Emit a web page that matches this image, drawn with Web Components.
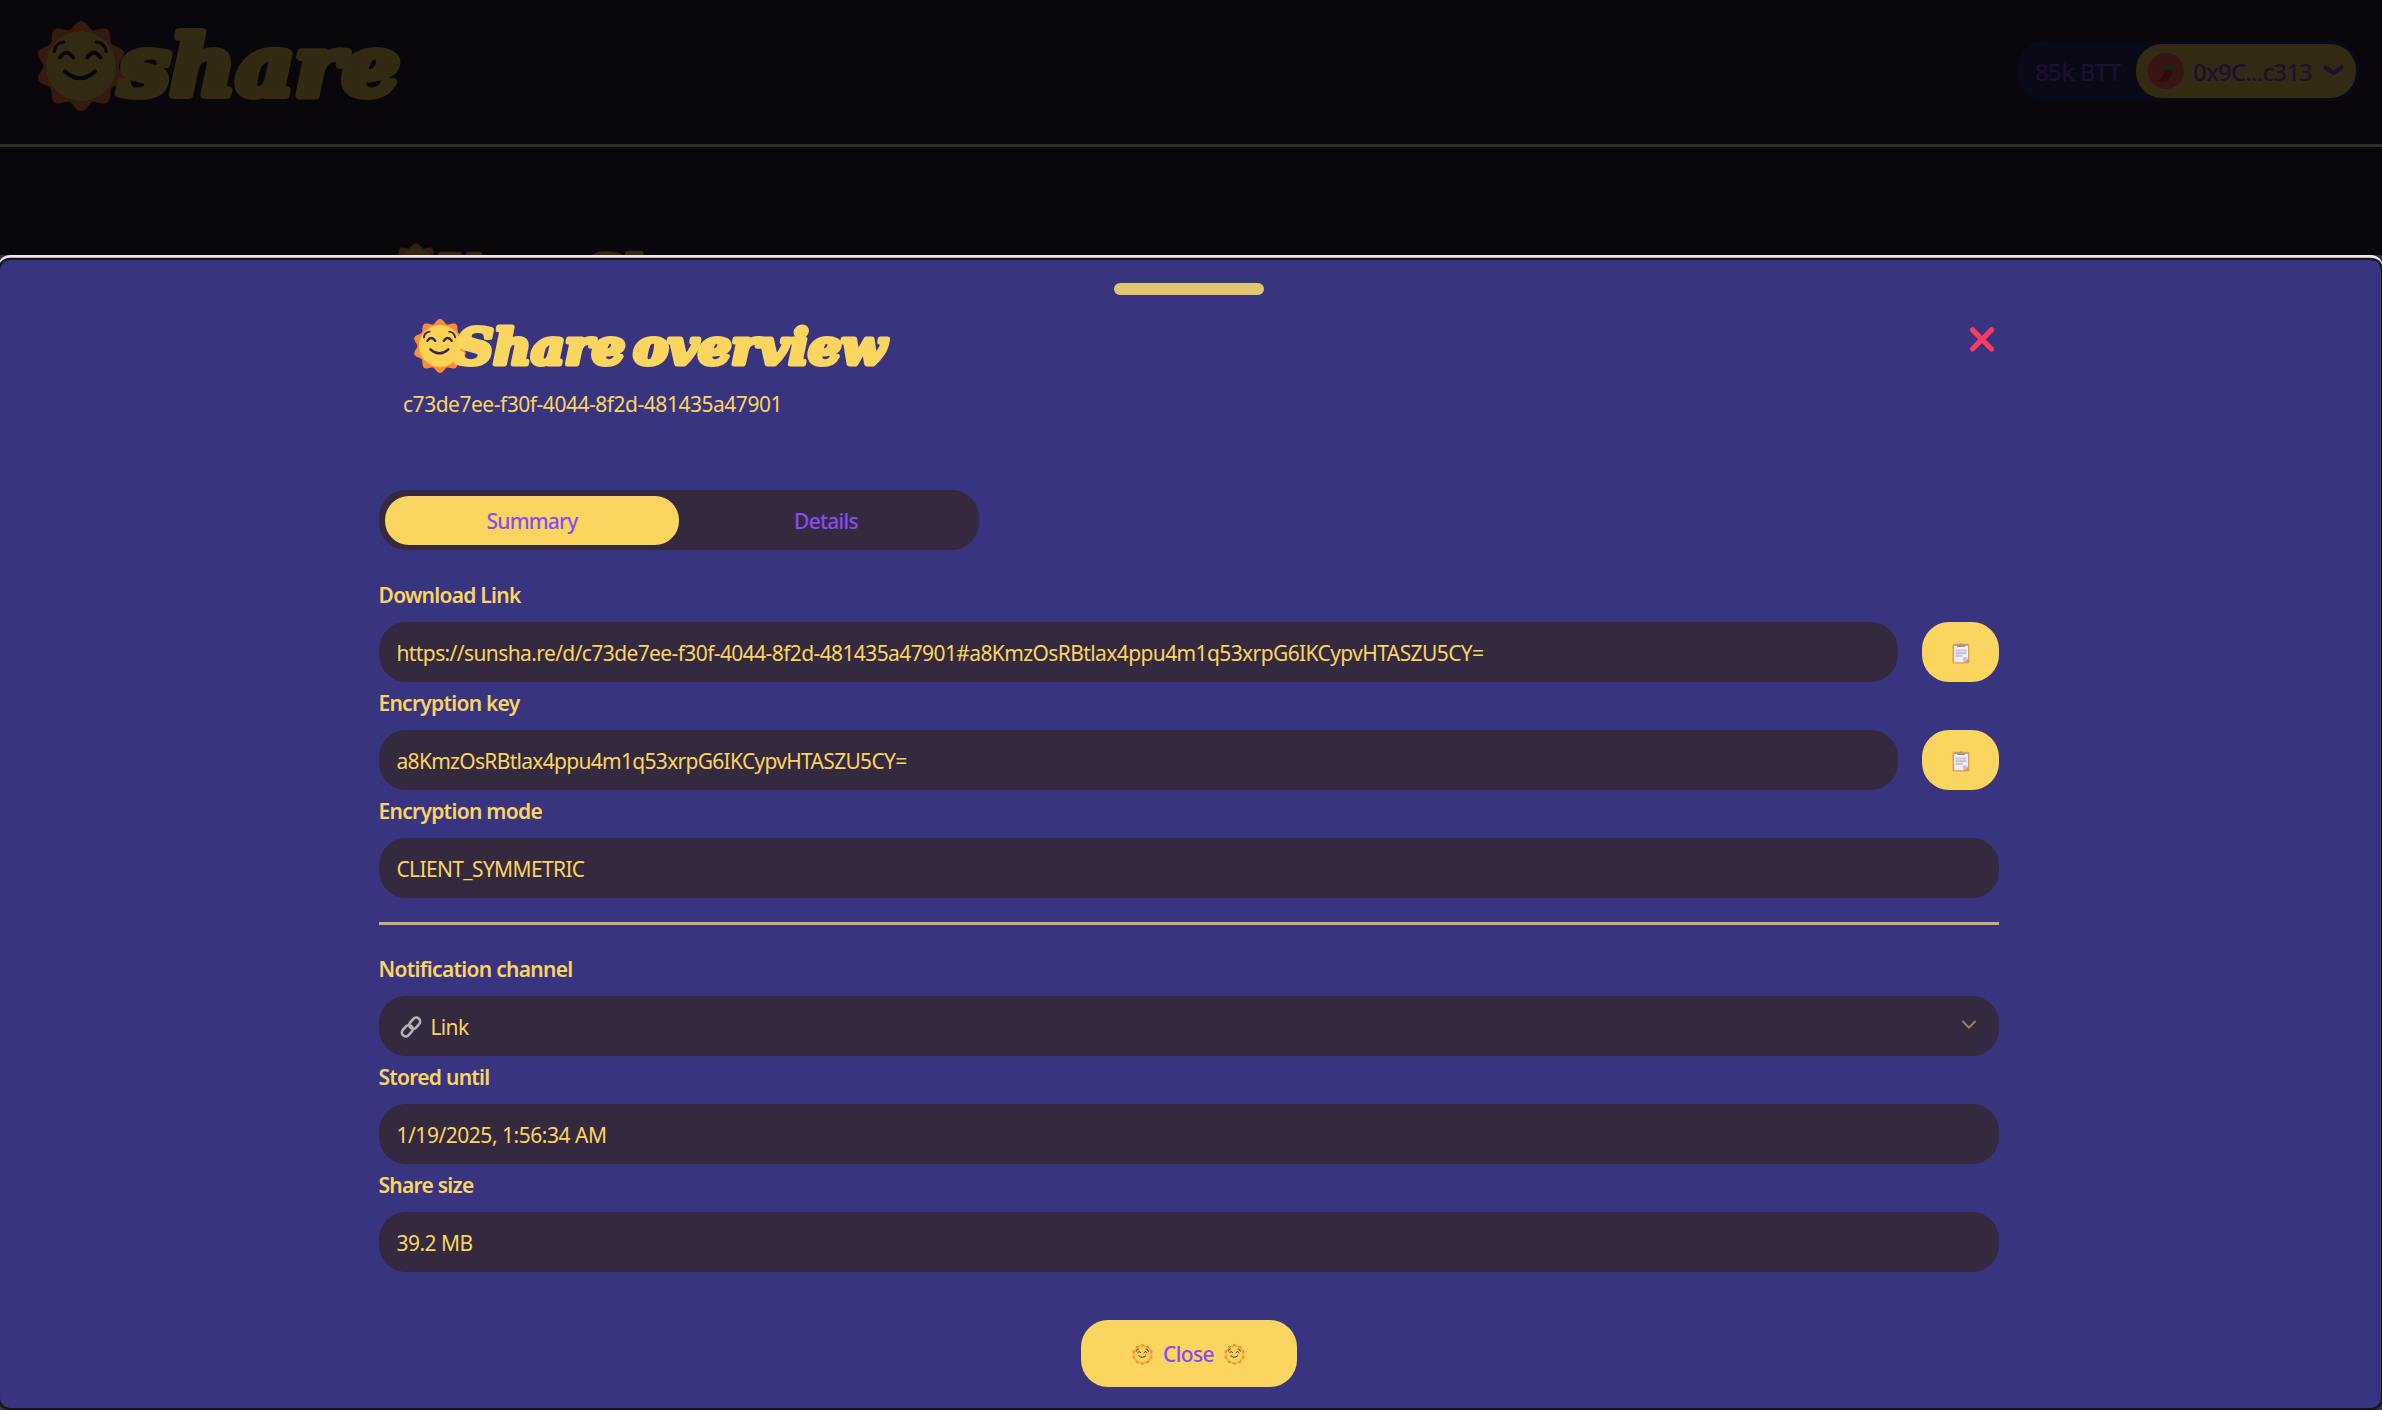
<!DOCTYPE html>
<html lang="en">
<head>
<meta charset="utf-8">
<title>Sunshare</title>
<style>
html,body{margin:0;height:100%;overflow:hidden;background:#09070c}
body{font-family:"Noto Sans","Open Sans",sans-serif;font-size:21px;color:#f9d560}
</style>
</head>
<body>
<sun-app></sun-app>
<script>
const define=(name,html,setup)=>customElements.define(name,class extends HTMLElement{
  connectedCallback(){
    if(this.shadowRoot)return;
    const a=(k,d='')=>this.getAttribute(k)??d;
    this.attachShadow({mode:'open'}).innerHTML=typeof html==='function'?html(a):html;
    if(setup)setup(this);
  }
});

/* Text tracked so that it fills a given width. */
define('fit-text','<style>:host{display:inline-block;white-space:nowrap}</style><span><slot></slot></span>',el=>{
  const w=+el.getAttribute('width'),span=el.shadowRoot.querySelector('span');
  const n=el.textContent.length,now=span.getBoundingClientRect().width;
  if(now)el.style.letterSpacing=((w-now)/n).toFixed(3)+'px';
});

const petals=()=>{
  let d='';
  for(let i=0;i<360;i+=3){
    const t=i*Math.PI/180,r=41.4+3.7*Math.cos(10*t);
    d+=(i?'L':'M')+(45+r*Math.sin(t)).toFixed(2)+' '+(45-r*Math.cos(t)).toFixed(2);
  }
  return d+'Z';
};
define('sun-face',a=>`<style>:host{display:block;flex:none}svg{display:block}</style>
<svg width="${a('size')}" height="${a('size')}" viewBox="0 0 90 90">
<path d="${petals()}" fill="var(--ray,#fc8a3c)"/><circle cx="45" cy="45" r="35" fill="var(--face,#fad355)"/>
<g fill="none" stroke="var(--ink,#35293f)" stroke-width="${a('pen','3.2')}" stroke-linecap="round">
<path d="M18.3 30.7Q19 22 27.7 21M60.3 21Q69 22 70.3 30.7"/>
<path stroke-width="4" d="M24 36.4Q30.5 27 37 36.4M51.3 36.4Q58 27 64.5 36.4M29 50.5Q44 64 59 50.5"/></g></svg>`);

define('sun-brand',a=>`<style>:host{display:flex}svg{display:block;overflow:visible}
text{font-family:"DejaVu Serif",serif;font-weight:700;font-style:italic;word-spacing:-9px;fill:var(--word,#fad560);stroke:var(--word,#fad560);stroke-linejoin:round}</style>
<sun-face size="${a('size')}"></sun-face>
<svg width="10" height="${a('size')}"><text x="${a('x')}" y="${a('base')}" font-size="${a('font')}" stroke-width="${a('pen')}" textLength="${a('len')}" lengthAdjust="spacingAndGlyphs">${a('text')}</text></svg>`);

define('wallet-pill',`<style>
:host{display:flex;box-sizing:border-box;width:342px;height:60px;border-radius:27px;background:#090918;padding:3px 3px 3px 18px;
 align-items:center;justify-content:space-between;color:#1d1030;font-size:24px;font-weight:500}
.acct{display:flex;align-items:center;box-sizing:border-box;width:220px;height:54px;border-radius:26px;background:#332a14;padding:0 12px}
fit-text{padding-top:1px}.n{margin-left:9px}.c{margin-left:11px}
svg{display:block;flex:none}</style>
<fit-text width="86">85k BTT</fit-text>
<div class="acct">
<svg width="36" height="36" viewBox="0 0 36 36"><circle cx="18" cy="18" r="18" fill="#391414"/><path d="M24 14Q26 28 13 29Q8 29 11 26Q17 25 17 16Z" fill="#330a0a"/><path d="M15 16L17 12L20 12L20 9L22 12L25 13L26 17L22 16L18 17Z" fill="#092a18"/></svg>
<fit-text class="n" width="119">0x9C...c313</fit-text>
<svg class="c" width="21" height="12" viewBox="0 0 21 12"><path d="M2.5 2.5L10.5 8L18.5 2.5" fill="none" stroke="#1d1030" stroke-width="4" stroke-linecap="round" stroke-linejoin="round"/></svg>
</div>`);

define('app-header',`<style>
:host{--ray:#341a0f;--face:#332a14;--ink:#09070c;--word:#332a14;
 display:flex;justify-content:space-between;align-items:flex-start;box-sizing:border-box;height:147px;border-bottom:3px solid #31311f;padding:21px 23px 0 35.5px}
wallet-pill{margin-top:20px}</style>
<sun-brand size="90" text="share" font="83" pen="8" x="-7" base="74" len="281"></sun-brand>
<wallet-pill></wallet-pill>`);

define('page-heading',`<style>:host{--ray:#341a0f;--face:#332a14;--ink:#09070c;--word:#332a14;display:block;padding:96px 0 0 388.5px}</style>
<sun-brand size="54" text="Your Shares" font="48" pen="4.5" x="-6" base="46.7" len="352"></sun-brand>`);

define('tab-bar',`<style>
:host{display:flex;box-sizing:border-box;width:600px;height:60px;border-radius:27px;background:#35293f;padding:5.5px 6px;color:#864df0;font-weight:500}
div{flex:1;display:flex;align-items:center;justify-content:center;border-radius:24px;padding-top:2px}
.on{background:#fad560}</style>
<div class="on"><fit-text width="91">Summary</fit-text></div><div><fit-text width="64">Details</fit-text></div>`);

const clipboard=`<svg width="18" height="22" viewBox="0 0 18 22"><rect x=".5" y="1.8" width="16.8" height="19.6" rx="1.2" fill="#e39a58"/><path d="M2 4H16V16.5L11.5 20.3H2Z" fill="#f3eef8"/><path d="M16 15.3L11.2 20.2L11.2 15.5Z" fill="#c0b8d8"/><path d="M3.5 8.5H14.5M3.5 11.2H14.5M3.5 13.8H10.5" stroke="#cbc8d2" stroke-width="2.2"/><path d="M5 5V2.5H8L9 .8L10 2.5H13V5Z" fill="#9c9b96"/></svg>`;
const chain=`<svg width="22" height="22" viewBox="0 0 22 22" fill="none" stroke="#b4b2b6" stroke-width="2.6"><rect x="-6.2" y="-3.9" width="12.4" height="7.8" rx="3.9" transform="translate(7.3 14.8) rotate(-48)"/><rect x="-6.2" y="-3.9" width="12.4" height="7.8" rx="3.9" transform="translate(14.7 7.2) rotate(-48)"/></svg>`;
define('form-field',a=>`<style>
:host{display:block}
.label{height:48px;box-sizing:border-box;padding:6.5px 0 0;line-height:28px;font-weight:600}
.label fit-text{margin-left:-.5px}
.row{display:flex;gap:24px}
.box{flex:1;display:flex;align-items:center;height:60px;border-radius:27px;background:#35293f;padding:2px 18px 0 17.5px;box-sizing:border-box}
.copy{width:77px;height:60px;border-radius:27px;background:#fad560;display:flex;align-items:center;justify-content:center;padding-top:2px;box-sizing:border-box}
.link{margin:0 9px 0 3px}.down{margin:-4px 4px 0 auto}svg{display:block}</style>
<div class="label"><fit-text width="${a('lw')}">${a('label')}</fit-text></div>
<div class="row"><div class="box">${a('select')?`<div class="link">${chain}</div>`:''}<fit-text width="${a('vw')}">${a('value')}</fit-text>${a('select')?'<svg class="down" width="16" height="10" viewBox="0 0 16 10"><path d="M1.5 1L8 7.6L14.5 1" fill="none" stroke="#9b834f" stroke-width="2"/></svg>':''}</div>
${a('copy')?`<div class="copy">${clipboard}</div>`:''}</div>`);

define('close-button',`<style>
:host{display:flex;align-items:center;justify-content:center;gap:10px;box-sizing:border-box;width:216px;height:67px;border-radius:27px;background:#fad560;color:#864df0;font-weight:500;padding:2px 1px 0 0}
sun-face{margin-top:1px}</style>
<sun-face size="21" pen="4"></sun-face><fit-text width="51">Close</fit-text><sun-face size="21" pen="4"></sun-face>`);

define('share-sheet',`<style>
:host{display:flex;flex-direction:column;box-sizing:border-box;position:absolute;left:0;top:260px;width:2381px;height:1148px;background:#393480;border-radius:10px;
 box-shadow:0 0 0 2.3px #15131c,0 -3px 0 2px #ece7ec,0 0 0 8px #35333d;clip-path:inset(-5px -1px -2px 0);padding:22.5px 382px 0 379px}
.handle{width:150px;height:12.5px;border-radius:7px;background:#dfc66f;align-self:center}
.head{display:flex;justify-content:space-between;align-items:flex-start;margin-top:24px;height:171px}
.head sun-brand{padding-left:33.5px}
.uuid{padding:15px 0 0 24px;line-height:32px}
.x{margin:8px 5px 0 0}
hr{margin:23.5px 0;border:0;width:100%;height:3px;background:#cbb06c}
form-field.first{margin-top:24px}
close-button{align-self:center;margin-top:47.5px}</style>
<div class="handle"></div>
<div class="head"><div><sun-brand size="54" text="Share overview" font="48" pen="5" x="-11" base="45" len="430"></sun-brand>
<div class="uuid"><fit-text width="379">c73de7ee-f30f-4044-8f2d-481435a47901</fit-text></div></div>
<svg class="x" width="24" height="25" viewBox="0 0 24 25"><path d="M2.5 2.8L21.5 22M21.5 2.8L2.5 22" stroke="#f63d5f" stroke-width="5.2" stroke-linecap="round"/></svg></div>
<tab-bar></tab-bar>
<form-field class="first" label="Download Link" lw="142" value="https://sunsha.re/d/c73de7ee-f30f-4044-8f2d-481435a47901#a8KmzOsRBtlax4ppu4m1q53xrpG6IKCypvHTASZU5CY=" vw="1087" copy="1"></form-field>
<form-field label="Encryption key" lw="141" value="a8KmzOsRBtlax4ppu4m1q53xrpG6IKCypvHTASZU5CY=" vw="510" copy="1"></form-field>
<form-field label="Encryption mode" lw="163.5" value="CLIENT_SYMMETRIC" vw="188"></form-field>
<hr>
<form-field label="Notification channel" lw="194" value="Link" vw="38" select="1"></form-field>
<form-field label="Stored until" lw="111" value="1/19/2025, 1:56:34 AM" vw="210"></form-field>
<form-field label="Share size" lw="95" value="39.2 MB" vw="76"></form-field>
<close-button></close-button>`);

define('sun-app',`<style>:host{display:block;position:relative;height:1410px;overflow:hidden}</style>
<app-header></app-header><page-heading></page-heading><share-sheet></share-sheet>`);
</script>
</body>
</html>
